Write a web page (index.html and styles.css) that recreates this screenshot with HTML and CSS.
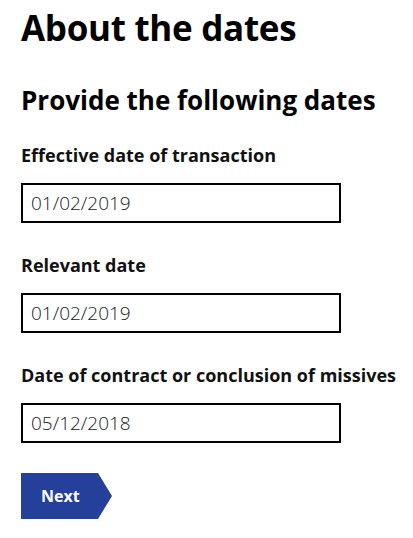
FILE: index.html
```html
<!DOCTYPE html>
<html lang="en">
<head>
    <meta charset="UTF-8">
    <meta name="viewport" content="width=device-width, initial-scale=1.0">
    <title>About the dates</title>
    <link rel="stylesheet" href="styles.css">
</head>
<body>
    <h1>About the dates</h1>

    <h2>Provide the following dates</h2>

    <form class="dates-form">
        <div class="field">
            <label for="effective">Effective date of transaction</label>
            <input id="effective" class="date-input" type="text" value="01/02/2019">
        </div>

        <div class="field">
            <label for="relevant">Relevant date</label>
            <input id="relevant" class="date-input" type="text" value="01/02/2019">
        </div>

        <div class="field">
            <label for="contract">Date of contract or conclusion of missives</label>
            <input id="contract" class="date-input" type="text" value="05/12/2018">
        </div>

        <button type="button" class="next-button">Next</button>
    </form>
</body>
</html>
```

FILE: styles.css
```css
body {
    font-family: "Open Sans", Lato, Arial, sans-serif;
    color: #000;
    margin: 0;
    padding: 0 21px;
    background: #fff;
}
h1 {
    font-size: 35px;
    font-weight: 700;
    margin: 6px 0 0;
    line-height: 44px;
    letter-spacing: -0.3px;
}
h2 {
    font-size: 26px;
    font-weight: 700;
    margin: 34px 0 0;
    line-height: 32px;
}
.dates-form {
    margin-top: 27px;
}
.field {
    display: flex;
    flex-direction: column;
    align-items: flex-start;
    margin-bottom: 30px;
}
.field label {
    font-size: 18px;
    font-weight: 700;
    line-height: 24px;
    margin-bottom: 16px;
    color: #111;
    white-space: nowrap;
}
.date-input {
    box-sizing: border-box;
    width: 320px;
    height: 40px;
    border: 2px solid #000;
    padding: 0 8px;
    font-family: inherit;
    font-size: 19px;
    font-weight: 300;
    color: #1a1a1a;
    background: #fff;
}
.next-button {
    display: block;
    width: 91px;
    height: 46px;
    padding: 0 0 0 20px;
    border: none;
    text-align: left;
    background: #24409a;
    color: #fff;
    font-family: inherit;
    font-size: 16px;
    font-weight: 700;
    clip-path: polygon(0 0, 77px 0, 100% 50%, 77px 100%, 0 100%);
    cursor: pointer;
}
```
